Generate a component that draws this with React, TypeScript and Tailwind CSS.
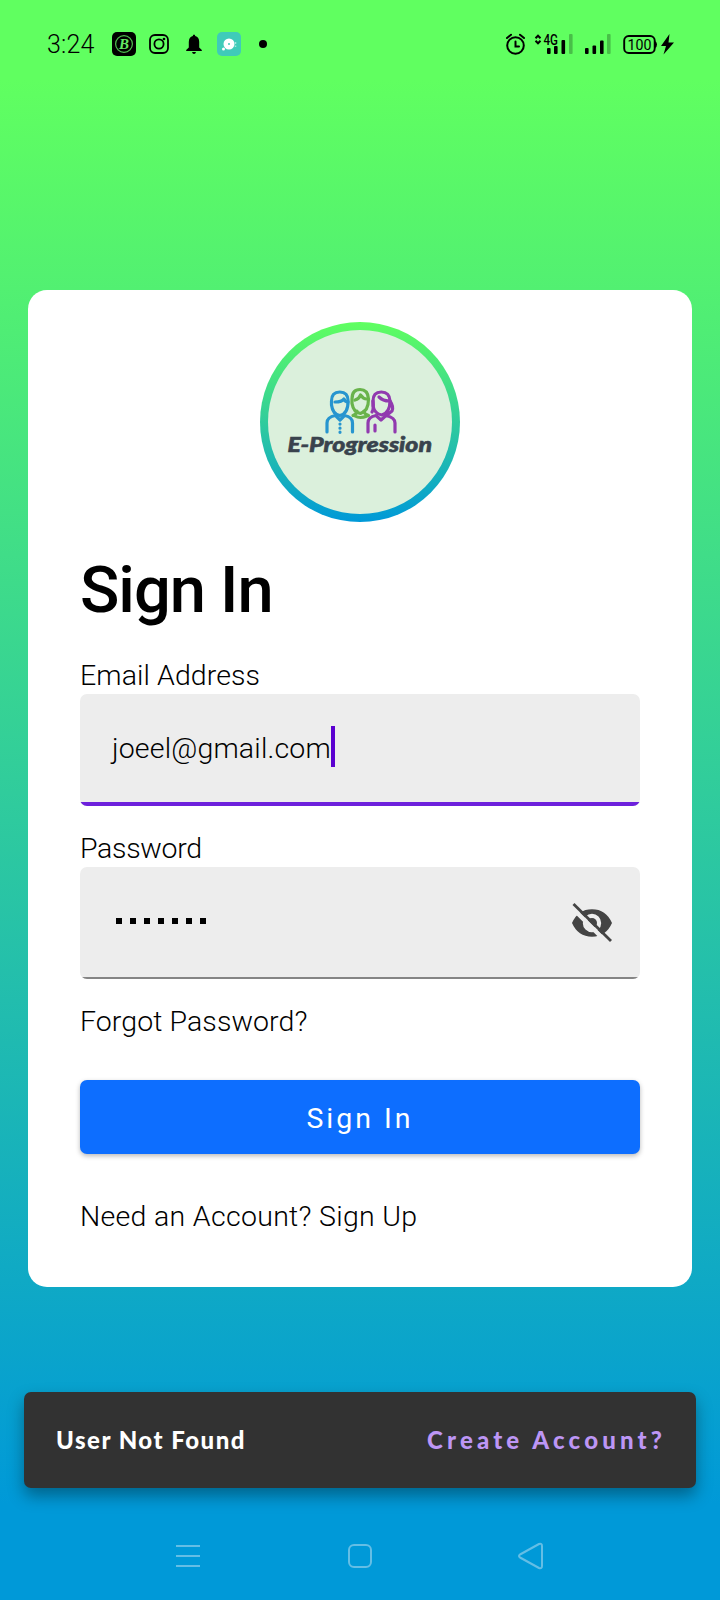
import React from "react";

function StatusBar() {
  return (
    <header className="flex h-[88px] shrink-0 items-center pl-[47px] pr-[46px] text-black">
      <span className="w-[65px] font-['Roboto'] text-[25px] leading-none font-light tracking-[0.2px]">3:24</span>
      <svg className="h-6 w-6" viewBox="0 0 24 24">
        <rect width="24" height="24" rx="5" />
        <circle cx="12" cy="12" r="8.4" fill="none" stroke="#4fc04f" strokeWidth="1.2" />
        <text x="12" y="17" textAnchor="middle" fontFamily="Liberation Serif" fontSize="15" fontWeight="700" fontStyle="italic" fill="#64e864">B</text>
      </svg>
      <svg className="ml-[13px] h-5 w-5" viewBox="0 0 20 20" fill="none" stroke="#000" strokeWidth="1.8">
        <rect x="1" y="1" width="18" height="18" rx="5" />
        <circle cx="10" cy="10" r="4.6" />
        <circle cx="15" cy="5" r="1.3" fill="#000" stroke="none" />
      </svg>
      <svg className="ml-[17px] h-5 w-4" viewBox="0 0 16 20">
        <path d="M8 0.5q1.2 0 1.2 1.5q4 1 4 6v5.500l2.600 2.500v1H0.200v-1l2.600-2.500V8q0-5 4-6Q6.800 0.500 8 0.500ZM6 18h4q-.5 2-2 2t-2-2Z" />
      </svg>
      <svg className="ml-[15px] h-6 w-6" viewBox="0 0 24 24">
        <rect width="24" height="24" rx="5" fill="#3fcbb9" />
        <circle cx="12" cy="12" r="5.500" fill="#fff" />
        <circle cx="12" cy="12" r="1" fill="#3fcbb9" />
        <circle cx="6.500" cy="17" r="1.500" fill="#fff" />
        <path d="M18.500 10v2M18.500 13.500v1.500" stroke="#a5e8de" strokeWidth="1.500" />
      </svg>
      <svg className="ml-[18px] h-2 w-2" viewBox="0 0 8 8"><circle cx="4" cy="4" r="4" /></svg>
      <svg className="ml-auto h-6 w-[169px]" viewBox="505 32 169 24">
        <g fill="none" stroke="#000" strokeWidth="2" strokeLinecap="round">
          <circle cx="515.500" cy="45.500" r="8.300" />
          <path d="M515.500 41.500v5h3.500M507 38l4-3.300M524 38l-4-3.300" />
        </g>
        <path d="M535.500 38.200l2.500-2.500 2.500 2.500M535.500 40.800l2.500 2.500 2.500-2.500" fill="none" stroke="#000" strokeWidth="2" />
        <text x="543.500" y="45" fontFamily="Roboto" fontSize="14" fontWeight="500" textLength="14.500" lengthAdjust="spacingAndGlyphs">4G</text>
        <g>
          <rect x="547" y="48" width="3.600" height="6" rx="1" />
          <rect x="554" y="46" width="3.600" height="8" rx="1" />
          <rect x="561.500" y="40" width="3.600" height="14" rx="1" />
          <rect x="569" y="34" width="3.600" height="20" rx="1" opacity=".25" />
          <rect x="585" y="48" width="3.600" height="6" rx="1" />
          <rect x="592.500" y="45.500" width="3.600" height="8.500" rx="1" />
          <rect x="600" y="40.500" width="3.600" height="13.500" rx="1" />
          <rect x="607" y="34" width="3.600" height="20" rx="1" opacity=".25" />
        </g>
        <rect x="624.200" y="36" width="30.500" height="17" rx="4.500" fill="none" stroke="#000" strokeWidth="1.900" />
        <path d="M655 41q2 1 2 3.500t-2 3.500Z" />
        <text x="627.500" y="49.500" fontFamily="Roboto" fontSize="14.500" textLength="24" lengthAdjust="spacingAndGlyphs">100</text>
        <path d="M669.500 34 661 46h5l-2.500 8.500L674 42.500h-5.500Z" />
      </svg>
    </header>
  );
}

function Logo() {
  return (
    <div className="flex h-[200px] w-[200px] items-center justify-center self-center rounded-full bg-linear-to-b/srgb from-[#60ff60] to-[#0099d8]">
      <svg className="h-[184px] w-[184px] rounded-full bg-[#dbf0dc]" viewBox="268 330 184 184">
        <g fill="none" strokeWidth="3.200" strokeLinecap="round" strokeLinejoin="round">
          <g stroke="#69b34b">
            <path d="M352 399q0-9.500 8-9.500t8.500 9.500q0 12-8 14.500q-7-1-8.500-10Z" />
            <path d="M355 400q4-1 5.500-5q3 4 6 4M357 411q0 3-4 4.500M364 411q0 3 4.500 4.500M355 416q5 3 12 0" />
          </g>
          <g stroke="#2795cf">
            <path d="M331.500 401q0-9 8.300-9t8.300 9q0 13-8.300 14.500q-7-1-8.300-10.500Z" />
            <path d="M335 402q7 0 9-3q1 3 4 3M327 432v-9q0-6 8.500-7.500l4.500 4.500 4.500-4.500q8 1.500 8 7.500v9" />
            <path d="M340 424v9" strokeDasharray=".1 4" />
          </g>
          <g stroke="#913aaf">
            <path d="M373 401q0-9 8.300-9t8.700 9q0 12-8.300 14q-7-1-8.700-9Z" />
            <path d="M379 397q4 4 10 4M373 401q1 8-1 11M390 401q4 6 2 10l-5 4M368 432v-9q0-6 8-7.500l5 4.500 5-4.500q9 2 9 7.500v9M375 425v6" />
          </g>
        </g>
        <text x="287.500" y="451.500" fontFamily="Lato" fontSize="21.500" fontWeight="900" fontStyle="italic" fill="#39434d" stroke="#39434d" strokeWidth=".6" textLength="144.500" lengthAdjust="spacingAndGlyphs">E-Progression</text>
      </svg>
    </div>
  );
}

function EyeOff() {
  return (
    <svg className="h-11 w-11" viewBox="570 900.5 44 44">
      <path fillRule="evenodd" fill="#444" d="M572 923.500q6-13.800 20-13.800t20 13.800q-6 13.700-20 13.700t-20-13.700ZM592 914.300a9.200 9.200 0 1 0 0 18.400a9.200 9.200 0 1 0 0-18.400Z" />
      <circle cx="592" cy="923.500" r="5" fill="#444" />
      <path d="M570.500 906.500 607 943" stroke="#ededed" strokeWidth="4.500" />
      <path d="M573.500 904.500 611 941.500" stroke="#444" strokeWidth="2.800" />
    </svg>
  );
}

export default function App() {
  return (
    <div className="flex h-[1600px] w-[720px] flex-col overflow-hidden bg-linear-to-b/srgb from-[#60ff60] from-[5%] to-[#0099d8] to-[94%] font-['Roboto',sans-serif]">
      <StatusBar />
      <main className="mx-7 mt-[202px] flex h-[997px] shrink-0 flex-col rounded-[19px] bg-white px-[52px] pt-8 text-[28.5px] leading-[34px] font-light text-black">
        <Logo />
        <h1 className="mt-[28px] h-[80px] text-[65px] leading-[80px] font-medium"><span className="tracking-[-1px]">Sign In</span></h1>
        <label className="mt-[29px] h-[35px]"><span className="tracking-[0.08px]">Email Address</span></label>
        <div className="flex h-[112px] shrink-0 flex-col overflow-hidden rounded-[7px] bg-[#ededed]">
          <div className="flex flex-1 items-center pl-[32px]">
            <span className="pt-0.5 tracking-[0.17px]">joeel@gmail.com</span>
            <span className="mb-1 h-[41px] w-1 bg-[#5b00d0]" />
          </div>
          <div className="h-1 bg-[#6d20dc]" />
        </div>
        <label className="mt-[26px] h-[35px]"><span className="tracking-[-0.3px]">Password</span></label>
        <div className="flex h-[112px] shrink-0 flex-col overflow-hidden rounded-[7px] bg-[#ededed]">
          <div className="flex flex-1 items-center justify-between pr-[26px] pl-[36px]">
            <div className="mb-0.5 flex gap-2">
              {[0, 1, 2, 3, 4, 5, 6].map((i) => <span key={i} className="h-1.5 w-1.5 bg-black" />)}
            </div>
            <EyeOff />
          </div>
          <div className="h-0.5 bg-[#858585]" />
        </div>
        <a className="mt-[26px] h-[35px]"><span className="tracking-[0.08px]">Forgot Password?</span></a>
        <button className="mt-[40px] h-[74px] shrink-0 rounded-[7px] bg-[#0d6eff] pt-[3px] font-normal text-white shadow-[0_2px_5px_rgba(0,0,0,0.28)]"><span className="tracking-[3px]">Sign In</span></button>
        <p className="mt-[46px]"><span className="tracking-[0.3px]">Need an Account? Sign Up</span></p>
      </main>
      <div className="mx-6 mt-[105px] flex h-24 shrink-0 items-center justify-between rounded-[7px] bg-[#323232] pr-[30px] pl-8 font-['Lato'] text-[24px] font-black shadow-[0_8px_16px_rgba(0,0,0,0.35)]">
        <span className="tracking-[1.5px] text-white">User Not Found</span>
        <span className="tracking-[4.15px] text-[#bd96f5]">Create Account?</span>
      </div>
      <nav className="flex flex-1 items-center justify-between pr-[176px] pl-[174px] pt-[24px]">
        <svg className="h-7 w-7" viewBox="174 1542 28 28" stroke="#64bee5" strokeWidth="2"><path d="M176 1546h24M176 1556h24M176 1566h24" /></svg>
        <svg className="ml-px h-7 w-7" viewBox="346 1542 28 28" fill="none" stroke="#64bee5" strokeWidth="2"><rect x="349" y="1545" width="22" height="22" rx="5" /></svg>
        <svg className="h-7 w-7" viewBox="516 1542 28 28" fill="none" stroke="#64bee5" strokeWidth="2" strokeLinejoin="round"><path d="M520 1554.500 539 1544Q542 1543 542 1546V1566Q542 1569 539 1568L520 1557.500Q518 1556 520 1554.500Z" /></svg>
      </nav>
    </div>
  );
}
